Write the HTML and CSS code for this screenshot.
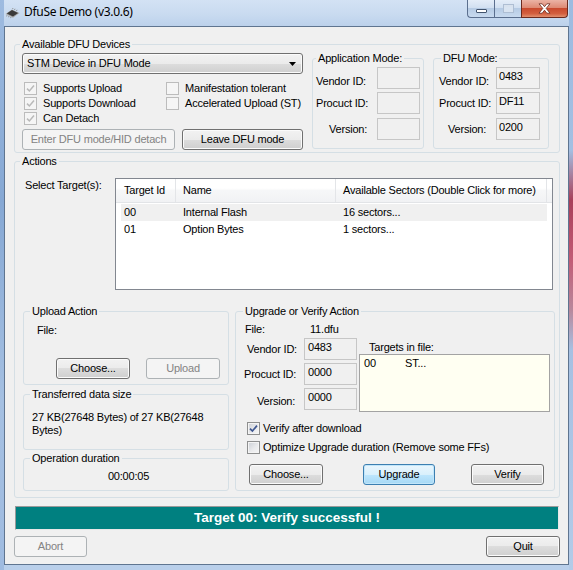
FILE: index.html
```html
<!DOCTYPE html>
<html>
<head>
<meta charset="utf-8">
<title>DfuSe Demo (v3.0.6)</title>
<link rel="stylesheet" href="styles.css">
</head>
<body>
<div class="window">
  <div class="titlebar">
    <svg class="app-icon" width="15" height="11" viewBox="0 0 15 11">
      <polygon points="0.5,6 7,1.5 14.5,5 8,9.8" fill="#a8a8a8"/>
      <polygon points="1.8,5.6 7,2.1 13.1,5 8,8.5" fill="#3a3a3a"/>
      <path d="M2 7.2 1.6 8.4M4 8 3.6 9.2M6 8.9 5.6 10.1M9.5 2 10 0.8M11.5 3 12 1.8M7.6 1 8 0" stroke="#8a8a8a" stroke-width="0.9"/>
    </svg>
    <span class="title">DfuSe Demo (v3.0.6)</span>
    <div class="caption">
      <div class="cap cap-min"><span class="min-glyph"></span></div>
      <div class="cap cap-max"><span class="max-glyph"></span></div>
      <div class="cap cap-close">
        <svg width="13" height="11" viewBox="0 0 13 11"><path d="M1 0.8h3.2l2.3 2.9 2.3-2.9h3.2l-3.8 4.6 3.8 4.8h-3.2l-2.3-3-2.3 3h-3.2l3.8-4.8z" fill="#fff" stroke="#6a2b20" stroke-width="0.8"/></svg>
      </div>
    </div>
  </div>

  <div class="client">
    <div class="group g-devices">
      <span class="legend">Available DFU Devices</span>
      <div class="dev-left">
        <div class="combo">
          <span>STM Device in DFU Mode</span>
          <svg class="combo-arrow" width="7" height="4" viewBox="0 0 7 4"><path d="M0 0H7L3.5 4Z" fill="#000"/></svg>
        </div>
        <div class="checks">
          <div class="chk"><span class="box dis"><svg width="9" height="9" viewBox="0 0 9 9"><path d="M1 4.6 3.4 7 8 1.6" fill="none" stroke="#b9b9b9" stroke-width="1.5"/></svg></span>Supports Upload</div>
          <div class="chk"><span class="box dis"></span>Manifestation tolerant</div>
          <div class="chk"><span class="box dis"><svg width="9" height="9" viewBox="0 0 9 9"><path d="M1 4.6 3.4 7 8 1.6" fill="none" stroke="#b9b9b9" stroke-width="1.5"/></svg></span>Supports Download</div>
          <div class="chk"><span class="box dis"></span>Accelerated Upload (ST)</div>
          <div class="chk"><span class="box dis"><svg width="9" height="9" viewBox="0 0 9 9"><path d="M1 4.6 3.4 7 8 1.6" fill="none" stroke="#b9b9b9" stroke-width="1.5"/></svg></span>Can Detach</div>
        </div>
        <div class="dev-buttons">
          <button class="btn btn-enter" disabled>Enter DFU mode/HID detach</button>
          <button class="btn btn-leave">Leave DFU mode</button>
        </div>
      </div>

      <div class="group g-mode g-app">
        <span class="legend">Application Mode:</span>
        <div class="mode-row"><span class="mlabel low">Vendor ID:</span><span class="field"></span></div>
        <div class="mode-row"><span class="mlabel">Procuct ID:</span><span class="field"></span></div>
        <div class="mode-row r3"><span class="mlabel ver">Version:</span><span class="field"></span></div>
      </div>

      <div class="group g-mode g-dfu">
        <span class="legend">DFU Mode:</span>
        <div class="mode-row"><span class="mlabel low">Vendor ID:</span><span class="field">0483</span></div>
        <div class="mode-row"><span class="mlabel">Procuct ID:</span><span class="field">DF11</span></div>
        <div class="mode-row r3"><span class="mlabel ver">Version:</span><span class="field">0200</span></div>
      </div>
    </div>

    <div class="group g-actions">
      <span class="legend">Actions</span>
      <div class="targets-row">
        <span class="targets-label">Select Target(s):</span>
        <div class="listview">
          <div class="lv-head">
            <span class="h1">Target Id</span>
            <span class="h2">Name</span>
            <span class="h3">Available Sectors (Double Click for more)</span>
            <span class="h4"></span>
          </div>
          <div class="lv-row sel"><span class="c1">00</span><span class="c2">Internal Flash</span><span class="c3">16 sectors...</span></div>
          <div class="lv-row"><span class="c1">01</span><span class="c2">Option Bytes</span><span class="c3">1 sectors...</span></div>
        </div>
      </div>

      <div class="actions-bottom">
        <div class="left-col">
          <div class="group g-upload">
            <span class="legend">Upload Action</span>
            <div class="up-file">File:</div>
            <div class="up-buttons">
              <button class="btn btn-sm">Choose...</button>
              <button class="btn btn-sm" disabled>Upload</button>
            </div>
          </div>
          <div class="group g-transfer">
            <span class="legend">Transferred data size</span>
            <div class="transfer-text">27 KB(27648 Bytes) of 27 KB(27648 Bytes)</div>
          </div>
          <div class="group g-duration">
            <span class="legend">Operation duration</span>
            <div class="duration-text">00:00:05</div>
          </div>
        </div>

        <div class="group g-upgrade">
          <span class="legend">Upgrade or Verify Action</span>
          <div class="ug-file"><span class="ug-file-label">File:</span><span>11.dfu</span></div>
          <div class="ug-main">
            <div class="ug-fields">
              <div class="ug-row"><span class="ulabel u-v">Vendor ID:</span><span class="field ufield">0483</span></div>
              <div class="ug-row"><span class="ulabel u-p">Procuct ID:</span><span class="field ufield">0000</span></div>
              <div class="ug-row"><span class="ulabel u-ver">Version:</span><span class="field ufield">0000</span></div>
            </div>
            <div class="ug-targets">
              <div class="ug-targets-label">Targets in file:</div>
              <div class="ug-list"><div class="ug-item"><span class="ug-id">00</span><span>ST...</span></div></div>
            </div>
          </div>
          <div class="ug-checks">
            <div class="chk2"><span class="box"><svg width="9" height="9" viewBox="0 0 9 9"><path d="M1 4.6 3.4 7 8 1.6" fill="none" stroke="#3e5690" stroke-width="1.7"/></svg></span>Verify after download</div>
            <div class="chk2"><span class="box"></span>Optimize Upgrade duration (Remove some FFs)</div>
          </div>
          <div class="ug-buttons">
            <button class="btn b-choose">Choose...</button>
            <button class="btn b-upgrade focus">Upgrade</button>
            <button class="btn b-verify">Verify</button>
          </div>
        </div>
      </div>
    </div>

    <div class="status">Target 00: Verify successful !</div>

    <div class="footer">
      <button class="btn b-abort" disabled>Abort</button>
      <button class="btn b-quit">Quit</button>
    </div>
  </div>
</div>
</body>
</html>
```

FILE: styles.css
```css
* { box-sizing: border-box; }
html, body { margin: 0; padding: 0; }
body {
  width: 573px; height: 570px; overflow: hidden;
  background: #bcd2ec;
  font-family: "Liberation Sans", Arial, sans-serif;
  font-size: 11px; line-height: 13px; letter-spacing: -0.2px;
  color: #000;
}
.window {
  width: 573px; height: 570px;
  display: flex; flex-direction: column;
  background:
    linear-gradient(180deg, #9dbbe0 0, #a3bfe2 150px, #a8405a 200px, #c25c76 260px, #b8889c 310px, #a6c0e2 350px, #b3cbe8 100%) right top / 4px 100% no-repeat,
    linear-gradient(180deg, #9ebbe0 0, #86a8d4 200px, #a5c0e2 400px, #9fbbe0 100%) left top / 4px 100% no-repeat,
    linear-gradient(180deg, #d3e2f4 0, #c9dbf0 14px, #bcd1eb 26px, #b9cfea 100%);
}

/* title bar */
.titlebar { height: 26px; flex: none; display: flex; align-items: flex-start; }
.app-icon { margin: 8px 0 0 5px; flex: none; }
.title {
  margin: 4px 0 0 4px;
  font-family: "Segoe UI", "Noto Sans", sans-serif;
  font-size: 12px; line-height: 16px; letter-spacing: -0.3px;
  color: #000;
}
.caption { margin-left: auto; margin-right: 5px; display: flex; height: 18px; }
.cap {
  height: 18px; border: 1px solid #5b6f8e; border-top: 0;
  display: flex; align-items: center; justify-content: center;
  background: linear-gradient(180deg, #e4edf8 0, #d2e0f1 45%, #b6cbe4 50%, #c8daef 100%);
}
.cap-min { width: 27px; border-right: 0; border-radius: 0 0 0 4px; }
.cap-max { width: 27px; border-right: 0; }
.cap-close {
  width: 47px; border-radius: 0 0 4px 0; border-color: #6b2a1e;
  background: linear-gradient(180deg, #ebb3a5 0, #de8a74 45%, #c94a2e 50%, #d35f3f 80%, #e2906f 100%);
}
.min-glyph { width: 11px; height: 4px; margin-top: 5px; background: #fff; border: 1px solid #42546e; border-radius: 1px; }
.max-glyph { width: 11px; height: 9px; border: 1px solid #aebed3; box-shadow: inset 0 2px 0 #d8e2ee; background: #d9e4f1; }

/* client area */
.client {
  margin-left: 4px; width: 565px; height: 539px; flex: none;
  background: #f0f0f0; border: 1px solid #5f7590;
  display: flex; flex-direction: column; align-items: flex-start;
}

/* group boxes */
.group { position: relative; border: 1px solid #d5dfe5; border-radius: 3px; flex: none; }
.legend {
  position: absolute; top: -7px; left: 5px;
  padding: 0 2px; background: #f0f0f0; white-space: nowrap; line-height: 13px;
}

/* buttons */
.btn {
  height: 21px; padding: 0; margin: 0;
  font: inherit; letter-spacing: inherit; line-height: 19px; color: #000;
  border: 1px solid #707070; border-radius: 3px;
  background: linear-gradient(180deg, #f2f2f2 0, #ebebeb 50%, #dddddd 50%, #cfcfcf 100%);
  box-shadow: inset 0 0 0 1px #fbfbfb;
  text-align: center; flex: none;
}
.btn:disabled {
  border-color: #adb2b5; background: #f4f4f4; color: #838383; box-shadow: none;
}
.btn.focus {
  border-color: #3c7fb1;
  background: linear-gradient(180deg, #eaf6fd 0, #d9f0fc 50%, #bee6fd 50%, #a7d9f5 100%);
  box-shadow: inset 0 0 0 1px #c2e6fa;
}

/* checkboxes */
.box {
  width: 13px; height: 13px; flex: none;
  border: 1px solid #8e8f8f;
  background: linear-gradient(135deg, #cbcfd5 0, #e9eaec 55%, #f6f6f6 100%);
  box-shadow: inset 0 0 0 1px #f4f4f4;
  display: flex; align-items: center; justify-content: center;
}
.box.dis { border-color: #bcbcbc; background: #f5f5f5; box-shadow: none; }

/* devices group */
.g-devices { margin: 17px 0 0 9px; width: 546px; height: 109px; display: flex; align-items: flex-start; }
.dev-left { margin: 8px 0 0 7px; width: 281px; flex: none; }
.combo {
  width: 281px; height: 21px;
  border: 1px solid #707070; border-radius: 3px;
  background: linear-gradient(180deg, #f2f2f2 0, #ebebeb 50%, #dddddd 50%, #cfcfcf 100%);
  box-shadow: inset 0 0 0 1px #fbfbfb;
  display: flex; align-items: center; padding: 0 6px 0 4px;
}
.combo span { flex: 1; }
.combo-arrow { flex: none; }
.checks { margin: 7px 0 0 2px; display: grid; grid-template-columns: 142px auto; grid-auto-rows: 15px; }
.chk { display: flex; align-items: center; gap: 6px; white-space: nowrap; }
.dev-buttons { margin-top: 3px; display: flex; gap: 7px; }
.btn-enter { width: 153px; }
.btn-leave { width: 121px; }

.g-mode { margin-top: 13px; height: 91px; padding-top: 8px; }
.g-app { margin-left: 9px; width: 112px; }
.g-dfu { margin-left: 9px; width: 116px; }
.g-app .legend { left: 3px; }
.g-dfu .legend { left: 7px; }
.mode-row { display: flex; align-items: center; height: 22px; }
.mode-row + .mode-row { margin-top: 3px; }
.mode-row.r3 { margin-top: 4px; }
.mlabel { flex: none; white-space: nowrap; }
.mlabel.low { padding-top: 7px; }
.g-app .mlabel { width: 64px; padding-left: 3px; }
.g-app .mlabel.ver { padding-left: 16px; }
.g-dfu .mlabel { width: 62px; padding-left: 5px; }
.g-dfu .mlabel.ver { padding-left: 14px; }
.field {
  height: 22px; border: 1px solid #c6c6c6; background: #f0f0f0;
  padding: 2px 0 0 2px; flex: none;
}
.g-app .field { width: 43px; }
.g-dfu .field { width: 44px; }

/* actions group */
.g-actions { margin: 8px 0 0 9px; width: 546px; height: 337px; }
.targets-row { margin: 16px 0 0 10px; display: flex; align-items: flex-start; }
.targets-label { width: 90px; padding-top: 1px; flex: none; }
.listview { width: 438px; height: 112px; border: 1px solid #828790; background: #fff; flex: none; }
.lv-head {
  display: flex; height: 24px;
  background: linear-gradient(180deg, #ffffff 0, #ffffff 40%, #f6f7f8 50%, #f1f2f4 100%);
  border-bottom: 1px solid #e2e4e7;
}
.lv-head span { line-height: 23px; border-right: 1px solid #e3e5e8; white-space: nowrap; flex: none; }
.lv-head .h1 { width: 60px; padding-left: 8px; }
.lv-head .h2 { width: 160px; padding-left: 7px; }
.lv-head .h3 { width: 211px; padding-left: 7px; }
.lv-head .h4 { flex: 1; border-right: 0; }
.lv-row { margin-left: 5px; width: 426px; height: 17px; display: flex; line-height: 17px; }
.lv-row.sel { margin-top: 1px; background: #f0f0f0; }
.lv-row span { white-space: nowrap; flex: none; }
.lv-row .c1 { width: 55px; padding-left: 3px; }
.lv-row .c2 { width: 160px; padding-left: 7px; }
.lv-row .c3 { padding-left: 7px; }

.actions-bottom { margin: 21px 0 0 8px; display: flex; align-items: flex-start; }
.left-col { width: 206px; display: flex; flex-direction: column; flex: none; }
.left-col .legend { left: 6px; }
.g-upload { width: 206px; height: 74px; padding-top: 12px; }
.up-file { margin-left: 13px; }
.up-buttons { margin: 21px 0 0 32px; display: flex; gap: 16px; }
.btn-sm { width: 74px; }
.g-transfer { margin-top: 9px; width: 206px; height: 56px; padding: 16px 0 0 8px; }
.transfer-text { width: 182px; }
.g-duration { margin-top: 8px; width: 206px; height: 33px; padding: 11px 0 0 5px; text-align: center; }

.g-upgrade { margin-left: 6px; width: 320px; height: 180px; padding-top: 11px; }
.g-upgrade .legend { left: 7px; }
.ug-file { display: flex; padding-left: 9px; }
.ug-file-label { width: 65px; flex: none; }
.ug-main { margin-top: 2px; display: flex; align-items: flex-start; }
.ug-fields { width: 123px; flex: none; }
.ug-row { display: flex; align-items: center; height: 22px; }
.ug-row + .ug-row { margin-top: 3px; }
.ulabel { width: 68px; flex: none; white-space: nowrap; padding-top: 1px; }
.u-v { padding-left: 11px; }
.u-p { padding-left: 8px; }
.u-ver { padding-left: 21px; padding-top: 4px; }
.ufield { width: 53px; padding-left: 3px; }
.ug-targets { flex: none; }
.ug-targets-label { padding: 3px 0 0 10px; }
.ug-list { width: 191px; height: 58px; border: 1px solid #a3a3a3; background: #fffff2; padding: 2px 0 0 4px; }
.ug-item { display: flex; }
.ug-id { width: 41px; flex: none; }
.ug-checks { margin: 7px 0 0 11px; }
.chk2 { display: flex; align-items: center; gap: 3px; height: 19px; white-space: nowrap; }
.ug-buttons { margin-top: 7px; display: flex; }
.b-choose { margin-left: 13px; width: 74px; }
.b-upgrade { margin-left: 40px; width: 72px; }
.b-verify { margin-left: 36px; width: 73px; }

/* status + footer */
.status {
  margin: 8px 0 0 10px; width: 544px; height: 24px; flex: none;
  background: #008080; color: #fff;
  border: 1px solid; border-color: #9a9a9a #e8e8e8 #e8e8e8 #9a9a9a;
  font-weight: bold; font-size: 13.5px; line-height: 22px; letter-spacing: 0;
  text-align: center;
}
.footer { margin-top: 6px; width: 563px; display: flex; justify-content: space-between; padding: 0 8px 0 9px; flex: none; }
.b-abort { width: 73px; }
.b-quit { width: 74px; }
```
